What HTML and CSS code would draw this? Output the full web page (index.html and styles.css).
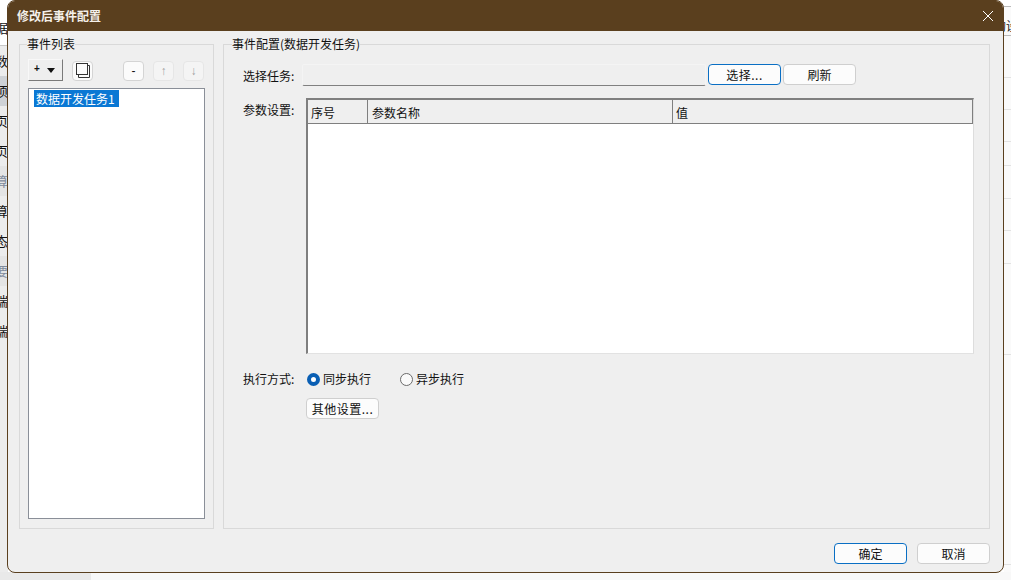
FILE: index.html
```html
<!DOCTYPE html>
<html lang="zh">
<head>
<meta charset="utf-8">
<title>修改后事件配置</title>
<link rel="stylesheet" href="styles.css">
</head>
<body>
<div class="desktop">
  <div class="bg-left">
    <div class="bg-top">据</div>
    <div class="bg-row">数</div>
    <div class="bg-row bg-sel">项</div>
    <div class="bg-row">页</div>
    <div class="bg-row">页</div>
    <div class="bg-row bg-dim">算</div>
    <div class="bg-row">算</div>
    <div class="bg-row">态</div>
    <div class="bg-row bg-dim">要</div>
    <div class="bg-row">端</div>
    <div class="bg-row">端</div>
  </div>
  <div class="bg-foot"></div>
  <div class="bg-right">
    <div class="bg-cell c6"></div>
    <div class="bg-cell c29 bg-text">的设计</div>
    <div class="bg-cell c42"></div>
    <div class="bg-cell c32"></div>
    <div class="bg-cell c32"></div>
    <div class="bg-cell c24"></div>
    <div class="bg-cell c33"></div>
    <div class="bg-cell c32"></div>
    <div class="bg-cell c33"></div>
    <div class="bg-cell c91"></div>
    <div class="bg-cell c210"></div>
  </div>

  <section class="dialog">
    <header class="titlebar">
      <span class="title">修改后事件配置</span>
      <svg class="close" width="12" height="12" viewBox="0 0 12 12"><path d="M1 1 L11 11 M11 1 L1 11" stroke="#fff" stroke-width="1" fill="none"/></svg>
    </header>
    <div class="body">
      <div class="panes">
        <fieldset class="group group-list">
          <legend>事件列表</legend>
          <div class="toolbar">
            <button class="tool-add"><span class="plus">+</span><i class="caret"></i></button>
            <button class="tool-btn tool-copy"><svg width="19" height="18" viewBox="0 0 19 18"><rect x="3.5" y="1.5" width="11" height="11" fill="none" stroke="#333"/><path d="M14.5 3.5 H16.5 V15.5 H5.5 V12.5" fill="none" stroke="#333"/></svg></button>
            <button class="tool-btn tool-minus">-</button>
            <button class="tool-btn tool-off">↑</button>
            <button class="tool-btn tool-off">↓</button>
          </div>
          <div class="listbox"><span class="list-item">数据开发任务1</span></div>
        </fieldset>
        <fieldset class="group group-config">
          <legend>事件配置(数据开发任务)</legend>
          <div class="row-task">
            <label class="lbl lbl-task">选择任务:</label>
            <div class="task-input"></div>
            <button class="btn btn-primary btn-select">选择...</button>
            <button class="btn btn-refresh">刷新</button>
          </div>
          <div class="row-params">
            <label class="lbl">参数设置:</label>
            <div class="table">
              <div class="thead">
                <div class="th th-no">序号</div>
                <div class="th th-name">参数名称</div>
                <div class="th th-val">值</div>
              </div>
            </div>
          </div>
          <div class="row-exec">
            <label class="lbl lbl-exec">执行方式:</label>
            <span class="radio radio-on"></span><span class="radio-text">同步执行</span>
            <span class="radio"></span><span class="radio-text">异步执行</span>
          </div>
          <button class="btn btn-more">其他设置...</button>
        </fieldset>
      </div>
      <footer class="actions">
        <button class="btn btn-primary btn-foot">确定</button>
        <button class="btn btn-foot">取消</button>
      </footer>
    </div>
  </section>
</div>
</body>
</html>
```
FILE: styles.css
```css
* { box-sizing: border-box; }
html, body { margin: 0; padding: 0; height: 100%; overflow: hidden; }
body { font-family: "Noto Sans CJK SC", "Liberation Sans", sans-serif; font-size: 12px; color: #111; background: #fff; }
.desktop { position: relative; width: 1011px; height: 580px; overflow: hidden; background: #fff; }

.bg-left { position: absolute; left: 0; top: 0; width: 8px; height: 580px; background: #ececec; overflow: hidden; }
.bg-top { height: 46px; padding-top: 19px; line-height: 18px; background: #fff; border-bottom: 1px solid #c8c8c8; font-size: 13px; text-indent: -5px; white-space: nowrap; }
.bg-row { height: 30px; line-height: 30px; width: 8px; font-size: 13px; text-indent: -5px; white-space: nowrap; }
.bg-sel { background: #cfd2d6; }
.bg-dim { background: #e4e4e4; color: #7f8a9c; }
.bg-foot { position: absolute; left: 0; right: 0; top: 572px; height: 8px; background: linear-gradient(to right, #e9e9e9 91px, #f8f8f8 91px); }
.bg-right { position: absolute; left: 1004px; top: 0; width: 7px; height: 572px; background: #fafafa; overflow: hidden; }
.bg-cell { border-bottom: 1px solid #e2e2e2; }
.bg-text { font-size: 12px; line-height: 18px; padding-top: 10px; text-indent: -10px; white-space: nowrap; border-bottom-color: #bbb; }
.c6 { height: 7px; background: #fff; border-bottom-color: #bbb; }
.c29 { height: 29px; }
.c42 { height: 42px; }
.c32 { height: 32px; }
.c24 { height: 24px; }
.c33 { height: 33px; }
.c91 { height: 91px; }
.c210 { height: 210px; }

.dialog { position: absolute; left: 7px; top: 0; width: 997px; height: 573px; border: 1px solid #5a3f1e; border-radius: 8px; background: #efefef; overflow: hidden; display: flex; flex-direction: column; }
.titlebar { flex: 0 0 30px; background: #5a3f1e; display: flex; align-items: center; justify-content: space-between; padding: 0 9px 0 9px; color: #f4f0ea; }
.title { font-size: 12px; font-weight: 700; line-height: 18px; }
.close { margin-top: 0; }
.body { flex: 1; display: flex; flex-direction: column; padding: 0 13px 0 11px; min-height: 0; }
.panes { display: flex; gap: 9px; height: 498px; flex: none; }

.group { margin: 6px 0 0 0; padding: 0; border: 1px solid #d9d9d9; min-width: 0; height: 492px; position: relative; }
.group legend { padding: 0; margin-left: -1px; font-size: 12px; line-height: 14px; }
.group-list { width: 195px; padding: 8px 8px 9px 8px; display: flex; flex-direction: column; }
.group-config { width: 767px; padding: 8px 15px 0 19px; }
.group-config legend { margin-left: -11px; }

.toolbar { display: flex; align-items: flex-start; height: 22px; }
button { font-family: inherit; font-size: 12px; color: #111; padding: 0; margin: 0; }
.tool-add { width: 35px; height: 22px; background: #eee; border: 1px solid; border-color: #f8f8f8 #7a7a7a #7a7a7a #f8f8f8; display: flex; align-items: center; padding-left: 5px; gap: 7px; line-height: 1; }
.plus { font-family: "Liberation Sans", sans-serif; font-size: 10px; font-weight: 700; margin-top: -2px; }
.caret { width: 0; height: 0; border-left: 4.5px solid transparent; border-right: 4.5px solid transparent; border-top: 5px solid #111; }
.tool-btn { width: 21px; height: 20px; margin-top: 2px; background: #fbfbfb; border: 1px solid #d4d4d4; border-radius: 4px; display: flex; align-items: center; justify-content: center; line-height: 1; font-family: "Liberation Sans", sans-serif; }
.tool-copy { margin-left: 9px; }
.tool-minus { margin-left: 30px; }
.tool-off { margin-left: 9px; color: #a0a0a0; background: #f4f4f4; border-color: #e6e6e6; }
.listbox { margin-top: 7px; flex: 1; background: #fff; border: 1px solid #8a8f98; padding: 0 5px; }
.list-item { display: inline-block; background: #0a78d4; color: #fff; font-size: 12px; line-height: 17px; height: 17px; padding: 0 4px 0 2px; margin-top: 1px; vertical-align: top; }

.lbl { display: inline-block; width: 63px; font-size: 12px; line-height: 18px; flex: none; }
.lbl-exec { width: 64px; }
.lbl-task { padding-top: 1px; height: 19px; }
.row-task { display: flex; align-items: center; height: 22px; margin-top: 5px; }
.task-input { width: 404px; height: 22px; margin-left: -4px; background: #efefef; border: 1px solid #f4f4f4; border-bottom: 1px solid #808080; border-radius: 2px; }
.btn { background: #fcfcfc; border: 1px solid #cfcfcf; border-radius: 4px; line-height: 18px; height: 21px; }
.btn-primary { border-color: #0a6fc4; }
.btn-select { width: 73px; margin-left: 2px; margin-top: -1px; letter-spacing: 0.5px; }
.btn-refresh { width: 73px; margin-left: 2px; margin-top: -1px; }
.row-params { display: flex; margin-top: 12px; }
.row-params .lbl { padding-top: 3px; height: 22px; }
.table { width: 669px; height: 256px; background: #fff; border: 1px solid #e2e2e2; border-left: 2px solid #7f7f7f; border-top: 2px solid #7f7f7f; border-right-color: #ddd; }
.thead { display: flex; height: 24px; background: #efefef; border-bottom: 1px solid #7f7f7f; }
.th { border-right: 1px solid #7f7f7f; padding: 4px 2px 0 3px; line-height: 18px; font-size: 12px; }
.th-no { width: 60px; }
.th-name { width: 305px; padding-left: 4px; }
.th-val { flex: 1; padding-left: 3px; }
.row-exec { display: flex; align-items: center; margin-top: 16px; height: 18px; }
.radio { width: 13px; height: 13px; border-radius: 50%; border: 1px solid #6b6b6b; background: #fafafa; flex: none; }
.radio-on { border: 4px solid #0a5fb4; background: #fff; }
.radio-text { margin-left: 3px; width: 77px; line-height: 18px; }
.btn-more { display: block; width: 73px; height: 21px; margin: 10px 0 0 63px; letter-spacing: 0.5px; }
.actions { display: flex; justify-content: flex-end; gap: 10px; padding-top: 14px; }
.btn-foot { width: 73px; height: 21px; }
```
